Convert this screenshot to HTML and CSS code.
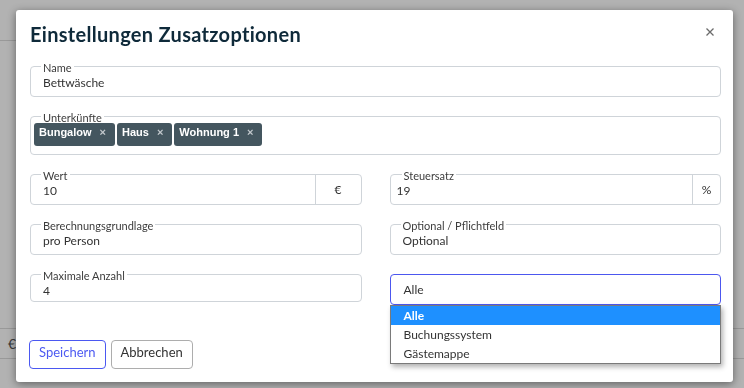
FILE: index.html
```html
<!DOCTYPE html>
<html lang="de">
<head>
<meta charset="utf-8">
<title>Einstellungen Zusatzoptionen</title>
<link rel="stylesheet" href="styles.css">
</head>
<body>
<div class="page">
  <div class="page-header"></div>
  <div class="page-row"><span class="page-cell">€</span></div>
</div>
<div class="backdrop"></div>
<div class="modal">
  <div class="modal-header">
    <h2 class="modal-title">Einstellungen Zusatzoptionen</h2>
    <button class="close" type="button" aria-label="Schließen">
      <svg width="8" height="8" viewBox="0 0 8 8"><path d="M0.5 0.5L7.5 7.5M7.5 0.5L0.5 7.5" stroke="#6b6b6b" stroke-width="1.3" fill="none"/></svg>
    </button>
  </div>
  <div class="form">
    <div class="field">
      <span class="field-label">Name</span>
      <div class="field-value">Bettwäsche</div>
    </div>
    <div class="field field-tags">
      <span class="field-label">Unterkünfte</span>
      <div class="tags">
        <span class="tag">Bungalow<span class="tag-x">×</span></span>
        <span class="tag">Haus<span class="tag-x">×</span></span>
        <span class="tag">Wohnung 1<span class="tag-x">×</span></span>
      </div>
    </div>
    <div class="grid">
      <div class="field field-addon">
        <div class="field-main">
          <span class="field-label">Wert</span>
          <div class="field-value">10</div>
        </div>
        <div class="addon addon-wide">€</div>
      </div>
      <div class="field field-addon">
        <div class="field-main field-main-tight">
          <span class="field-label">Steuersatz</span>
          <div class="field-value">19</div>
        </div>
        <div class="addon addon-narrow">%</div>
      </div>
      <div class="field">
        <span class="field-label">Berechnungsgrundlage</span>
        <div class="field-value">pro Person</div>
      </div>
      <div class="field">
        <span class="field-label">Optional / Pflichtfeld</span>
        <div class="field-value">Optional</div>
      </div>
      <div class="field field-short">
        <span class="field-label">Maximale Anzahl</span>
        <div class="field-value">4</div>
      </div>
      <div class="select-wrap">
        <div class="select">Alle</div>
        <ul class="dropdown">
          <li class="option option-active">Alle</li>
          <li class="option">Buchungssystem</li>
          <li class="option">Gästemappe</li>
        </ul>
      </div>
    </div>
  </div>
  <div class="actions">
    <button class="btn btn-primary" type="button">Speichern</button>
    <button class="btn btn-default" type="button">Abbrechen</button>
  </div>
</div>
</body>
</html>
```
FILE: styles.css
```css
html, body {
  margin: 0;
  padding: 0;
}
body {
  width: 744px;
  height: 388px;
  overflow: hidden;
  background: #fff;
  font-family: Lato, "Liberation Sans", sans-serif;
  color: #333;
}
.page-header {
  height: 40px;
  width: 600px;
  border-bottom: 1px solid #dcdcdc;
}
.page-row {
  margin-top: 287px;
  height: 29px;
  border-top: 1px solid #dcdcdc;
  border-bottom: 1px solid #dcdcdc;
  display: flex;
  align-items: center;
}
.page-cell {
  padding-left: 8px;
  font-size: 14px;
  color: #555;
}
.backdrop {
  position: fixed;
  inset: 0;
  background: rgba(0, 0, 0, 0.3);
}
.modal {
  position: absolute;
  left: 16px;
  top: 10px;
  width: 717px;
  height: 372px;
  box-sizing: border-box;
  padding: 12px 12px 0 14px;
  background: #fff;
  border-radius: 3px;
  box-shadow: 0 2px 8px rgba(0, 0, 0, 0.45);
}
.modal-header {
  display: flex;
  justify-content: space-between;
  align-items: flex-start;
  height: 24px;
  margin-bottom: 20px;
}
.modal-title {
  margin: 0;
  font-size: 20px;
  line-height: 24px;
  font-weight: 700;
  letter-spacing: 0.3px;
  color: #0f2a3a;
}
.close {
  border: 0;
  background: none;
  padding: 0;
  width: 8px;
  height: 8px;
  margin-top: 6px;
  margin-right: 7px;
  display: flex;
}
.form {
  display: flex;
  flex-direction: column;
  gap: 19px;
}
.field {
  border: 1px solid #cfd4d9;
  border-radius: 4px;
  padding: 0 12px 6px;
  background: #fff;
}
.field-label {
  display: block;
  width: max-content;
  margin: -5px 0 0 -2px;
  padding: 0 2px;
  background: #fff;
  font-size: 11px;
  line-height: 12px;
  color: #3c3c3c;
}
.field-value {
  margin-top: 2px;
  font-size: 12px;
  line-height: 14px;
  color: #333;
}
.field-tags {
  padding-bottom: 8px;
}
.tags {
  display: flex;
  gap: 2px;
  margin: -1px 0 0 -9px;
}
.tag {
  display: inline-flex;
  align-items: flex-start;
  box-sizing: border-box;
  height: 23px;
  padding: 3px 9px 0 5px;
  background: #44565f;
  border-radius: 3px;
  color: #fff;
  font-family: "Liberation Sans", Arial, sans-serif;
  font-weight: 700;
  font-size: 11px;
  line-height: 13px;
}
.tag-x {
  margin-left: 8px;
  color: #c3c9cd;
  font-weight: 700;
  font-size: 11px;
}
.grid {
  display: grid;
  grid-template-columns: 1fr 1fr;
  column-gap: 28px;
  row-gap: 19px;
  align-items: start;
}
.field-addon {
  display: flex;
  padding: 0;
}
.field-main {
  flex: 1;
  padding: 0 12px 6px;
}
.field-main-tight {
  padding-left: 6px;
}
.field-main-tight .field-label {
  margin-left: 5px;
}
.addon {
  box-sizing: border-box;
  border-left: 1px solid #cfd4d9;
  display: flex;
  align-items: center;
  justify-content: center;
  font-size: 12px;
  color: #333;
}
.addon-wide {
  width: 46px;
}
.addon-narrow {
  width: 28px;
}
.field-short {
  padding-bottom: 3px;
}
.select-wrap {
  position: relative;
}
.select {
  box-sizing: border-box;
  height: 31px;
  border: 1px solid #4c57ef;
  border-radius: 4px;
  padding-left: 13px;
  display: flex;
  align-items: center;
  font-size: 12px;
  color: #333;
  background: #fff;
}
.dropdown {
  position: absolute;
  left: 0;
  top: 100%;
  width: 100%;
  box-sizing: border-box;
  margin: 0;
  padding: 0;
  list-style: none;
  background: #fff;
  border: 1px solid #7a7a7a;
  box-shadow: 2px 3px 5px rgba(0, 0, 0, 0.3);
}
.option {
  height: 19px;
  line-height: 19px;
  padding-left: 13px;
  font-size: 12px;
  color: #333;
}
.option-active {
  background: #1e90ff;
  color: #fff;
  font-weight: 700;
}
.actions {
  display: flex;
  gap: 5px;
  margin: 35px 0 0 -1px;
}
.btn {
  box-sizing: border-box;
  height: 29px;
  padding: 0 9px 4px;
  border-radius: 4px;
  background: #fff;
  font-family: Lato, "Liberation Sans", sans-serif;
  font-size: 13px;
  line-height: 23px;
}
.btn-primary {
  border: 1px solid #4b58f1;
  color: #4d5af2;
}
.btn-default {
  border: 1px solid #adadad;
  color: #333;
}
```
